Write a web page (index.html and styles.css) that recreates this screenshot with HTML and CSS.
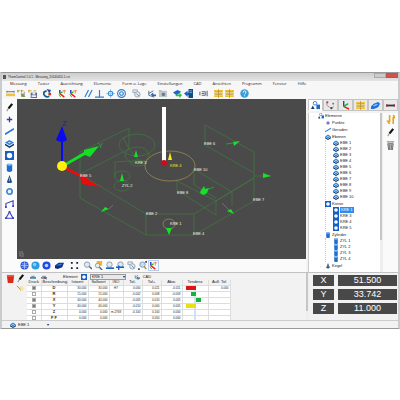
FILE: index.html
```html
<!DOCTYPE html>
<html lang="de">
<head>
  <meta charset="UTF-8" />
  <title>ThomControl</title>
  <link rel="stylesheet" href="styles.css">
</head>
<body>
  <!-- icon set -->
  <svg class="defs" aria-hidden="true">
    <symbol id="i-measure" viewBox="0 0 10 10"><path d="M1 4V2M9 4V2M1 3h8" stroke="#56a" fill="none"/><path d="M0 5h10v3H0z" fill="#f0c33c"/></symbol>
    <symbol id="i-probe" viewBox="0 0 10 10"><path d="M0 2h3M4 2h3M1 1v3M5 1v3" stroke="#b98c35"/><path d="M4 5h3l2 3v1H5z" fill="#7a9a55"/><path d="M8 3v4" stroke="#888"/></symbol>
    <symbol id="i-save" viewBox="0 0 10 10"><path d="M0 2h4M1 1v3M6 2h3" stroke="#d59a2c"/><path d="M3 4h7v6H3z" fill="#5c7089"/><path d="M5 4h3v2H5zM4 7h5v2H4z" fill="#eef"/></symbol>
    <symbol id="i-rotate" viewBox="0 0 10 10"><path d="M4 2Q0 3 1 6q2 4 6 2" stroke="#145a9c" stroke-width="2" fill="none"/><path d="M4 0l5 1-2 4z" fill="#145a9c"/><circle cx="7.500" cy="5.500" r="1.700" fill="#c8321e"/></symbol>
    <symbol id="i-axes" viewBox="0 0 10 10"><path d="M2 1v4" stroke="#22c" stroke-width="1.500"/><path d="M2 5l5 4" stroke="#e11" stroke-width="1.500"/><path d="M2 5l3-2" stroke="#1b1" stroke-width="1.500"/><path d="M1 6l2 3" stroke="#1b1"/><path d="M5 2h4M7 1v4" stroke="#d78a5a"/></symbol>
    <symbol id="i-parallel" viewBox="0 0 10 10"><path d="M1 9L5 1M5 9L9 1" stroke="#2f7fd0" stroke-width="1.300"/></symbol>
    <symbol id="i-perp" viewBox="0 0 10 10"><path d="M5 1v8M0 9h10" stroke="#2f7fd0" stroke-width="1.300"/></symbol>
    <symbol id="i-position" viewBox="0 0 10 10"><path d="M5 0v10M0 5h10" stroke="#9cc8ee"/><circle cx="5" cy="5" r="2.500" fill="none" stroke="#2f8fe0" stroke-width="1.300"/></symbol>
    <symbol id="i-concentric" viewBox="0 0 10 10"><circle cx="5" cy="5" r="4.300" fill="none" stroke="#2f7fd0" stroke-width="1.300"/><circle cx="5" cy="5" r="2" fill="none" stroke="#2f7fd0" stroke-width="1.200"/></symbol>
    <symbol id="i-zoom" viewBox="0 0 10 10"><circle cx="4.500" cy="4" r="3" fill="#dcebf7" stroke="#8796a5"/><path d="M7 6l3 3" stroke="#49627c" stroke-width="1.600"/></symbol>
    <symbol id="i-copy" viewBox="0 0 10 10"><path d="M1 1h5v3H1z" fill="#e3e9ee" stroke="#9aa8b4"/><circle cx="6" cy="6" r="3" fill="#dfe9f1" stroke="#8fa3b4"/><path d="M5 5l3 3" stroke="#5f8fb8"/></symbol>
    <symbol id="i-frame" viewBox="0 0 10 10"><path d="M2 2v5l6 2M2 5l5-3" stroke="#567" fill="none"/><path d="M4 6l3-2v2h3v2H7v1z" fill="#2267c4"/></symbol>
    <symbol id="i-camera" viewBox="0 0 10 10"><path d="M1 2h9v7H1z" fill="#bccac9"/><path d="M0 1h4v3" fill="#bbb"/><circle cx="6" cy="6" r="2" fill="#779"/></symbol>
    <symbol id="i-import" viewBox="0 0 10 10"><path d="M0 4l5-3 4 2-5 4z" fill="#1667d0"/><path d="M3 6h4V4l3 3-3 3V8H3z" fill="#26c43a"/></symbol>
    <symbol id="i-export" viewBox="0 0 10 10"><path d="M0 5l4-3v2h3v3H4v2z" fill="#1667d0"/><path d="M5 0h5v10H5z" fill="#184a80"/><path d="M6 2h3M6 4h3" stroke="#6bd"/></symbol>
    <symbol id="i-list" viewBox="0 0 10 10"><path d="M1 3v4M9 2v6M3 3h4M3 5h3M3 7h4" stroke="#667" stroke-width="1.200"/><path d="M7 3v4" stroke="#36b"/></symbol>
    <symbol id="i-report" viewBox="0 0 10 10"><path d="M0 1h10v2H0zM0 4h10v2H0zM0 7h10v2H0z" fill="#efc23a"/><path d="M5 0v10M1 3h8M1 6h8" stroke="#b58a2a" stroke-width=".700"/></symbol>
    <symbol id="i-help" viewBox="0 0 10 10"><circle cx="5" cy="5" r="4.700" fill="#3a9fd8"/><path d="M3.500 4q0-2 1.500-2t1.500 1.500T5 6M5 7v1" stroke="#fff" fill="none"/></symbol>
    <symbol id="i-brush" viewBox="0 0 10 10"><path d="M2 9l3-5" stroke="#9aa69a" stroke-width="1.400"/><path d="M4 6l4-5" stroke="#111" stroke-width="2.400"/></symbol>
    <symbol id="i-point" viewBox="0 0 10 10"><path d="M5 2v6M2 5h6" stroke="#3238b0" stroke-width="1.400"/></symbol>
    <symbol id="i-line" viewBox="0 0 10 10"><path d="M0 8l10-6" stroke="#2878dc" stroke-width="1.800"/></symbol>
    <symbol id="i-plane" viewBox="0 0 10 10"><path d="M0 4l5-3 5 3-5 3z" fill="#2d86dd"/><path d="M0 5l5 3 5-3v2L5 10 0 7z" fill="#103a70"/><path d="M3 4l2-1 2 1-2 1z" fill="#bfe0fa"/></symbol>
    <symbol id="i-circle" viewBox="0 0 10 10"><path d="M0 0h10v10H0z" fill="#1660c4"/><circle cx="5" cy="5" r="3" fill="#fff"/></symbol>
    <symbol id="i-cylinder" viewBox="0 0 10 10"><path d="M2 1h6v8q-3 2-6 0z" fill="#1f6fd0"/><ellipse cx="5" cy="1.800" rx="3" ry="1.200" fill="#86bdf2"/></symbol>
    <symbol id="i-cone" viewBox="0 0 10 10"><path d="M5 0l3 8q-3 2-6 0z" fill="#24507e"/><path d="M5 3v4" stroke="#8db6dc"/></symbol>
    <symbol id="i-ring" viewBox="0 0 10 10"><circle cx="5" cy="5" r="3" fill="#e4f0fb" stroke="#3c84cc" stroke-width="1.800"/></symbol>
    <symbol id="i-path" viewBox="0 0 10 10"><path d="M1 9V5l8-3v6" stroke="#3a40c0" fill="none" stroke-width="1.200"/><path d="M0 8h2v2H0zM8 7h2v2H8z" fill="#3a40c0"/></symbol>
    <symbol id="i-angle" viewBox="0 0 10 10"><path d="M5 1L1 8h8z" stroke="#3a40c0" fill="none" stroke-width="1.200"/><path d="M0 7h2v2H0zM8 7h2v2H8zM4 0h2v2H4z" fill="#3a40c0"/></symbol>
    <symbol id="i-globe" viewBox="0 0 10 10"><circle cx="5" cy="5" r="4.500" fill="#2450d8"/><path d="M1 5h8M5 1v8M2 3q3 1 6 0M2 7q3-1 6 0" stroke="#bcd4ff" fill="none" stroke-width=".800"/></symbol>
    <symbol id="i-sphere" viewBox="0 0 10 10"><circle cx="5" cy="5" r="4.500" fill="#2b9be4"/><circle cx="4" cy="4" r="2" fill="#7cd0fa"/></symbol>
    <symbol id="i-disc" viewBox="0 0 10 10"><circle cx="5" cy="5" r="4.500" fill="#2448e0"/><circle cx="5" cy="5" r="2" fill="#b8d2ff"/></symbol>
    <symbol id="i-solid" viewBox="0 0 10 10"><path d="M0 5l4-3 6 0-2 5-5 2-3-1z" fill="#0c2f86"/><path d="M1 5l4-2h4L6 5z" fill="#2b78ea"/></symbol>
    <symbol id="i-cad" viewBox="0 0 10 10"><path d="M0 6l3-3 5-2 2 2-2 4-5 2-3 0z" fill="#1a6fe0"/><path d="M2 5l4-2 2 1-4 2z" fill="#7db8f6"/></symbol>
    <symbol id="i-fit" viewBox="0 0 10 10"><path d="M1 1h2v2H1zM7 1h2v2H7zM1 7h2v2H1zM7 7h2v2H7z" fill="#123"/></symbol>
    <symbol id="i-zoomsel" viewBox="0 0 10 10"><path d="M3 0h6v5H3z" fill="#f1b52c"/><circle cx="4" cy="5" r="2.500" fill="#e8eef4" stroke="#8796a5"/><path d="M6 7l3 3" stroke="#49627c" stroke-width="1.600"/></symbol>
    <symbol id="i-zoomline" viewBox="0 0 10 10"><circle cx="5" cy="4" r="3" fill="#dcebf7" stroke="#8796a5"/><path d="M1 8h9" stroke="#1660c4" stroke-width="1.800"/></symbol>
    <symbol id="i-zoomplus" viewBox="0 0 10 10"><circle cx="5" cy="4" r="3" fill="#dcebf7" stroke="#8796a5"/><path d="M3 5v5M0 7h9" stroke="#1660c4" stroke-width="1.600"/></symbol>
    <symbol id="i-zoomarea" viewBox="0 0 10 10"><path d="M0 9h2M9 0v2" stroke="#111" stroke-width="1.500"/><circle cx="5" cy="4" r="3" fill="#bfe0f7" stroke="#8796a5"/><path d="M7 6l2 3" stroke="#a88a4c" stroke-width="1.600"/></symbol>
    <symbol id="i-shapes" viewBox="0 0 10 10"><circle cx="4.500" cy="2.500" r="2" fill="none" stroke="#2878dc"/><path d="M0 9l2-4 2 4z" fill="#153a6b"/><path d="M6 4h4v5H6z" fill="#2267c4"/></symbol>
    <symbol id="i-pins" viewBox="0 0 10 10"><path d="M1 1v4l5 3 3-2" stroke="#999" fill="none"/><circle cx="1.500" cy="1.500" r="1.200" fill="#c33"/><circle cx="6" cy="8" r="1.200" fill="#444"/><circle cx="8" cy="3" r="1" fill="#668"/></symbol>
    <symbol id="i-triad" viewBox="0 0 10 10"><path d="M3 0v6" stroke="#1a3fd0" stroke-width="1.500"/><path d="M3 6l6 3" stroke="#e11" stroke-width="1.500"/><path d="M3 6l5-3" stroke="#1b1" stroke-width="1.500"/></symbol>
    <symbol id="i-tool" viewBox="0 0 10 10"><path d="M0 4h10v2H0z" fill="#334"/><path d="M0 4h2v2H0zM8 4h2v2H8z" fill="#b22"/></symbol>
    <symbol id="i-bolt" viewBox="0 0 10 10"><path d="M4 0v7H2l2 3M8 10V3h2L8 0" stroke="#e8a21c" fill="none" stroke-width="1.800"/></symbol>
    <symbol id="i-trash" viewBox="0 0 10 10"><path d="M1 1h8M2 3h6l-1 7H3z" stroke="#666" fill="#bbb"/><path d="M4 4v5M6 4v5" stroke="#555" stroke-width=".700"/></symbol>
    <symbol id="i-trash-red" viewBox="0 0 10 10"><path d="M1 2h8l-1 8H2z" fill="#d92a1c"/><path d="M1 1h8v2H1z" fill="#f0563f"/></symbol>
    <symbol id="i-wand" viewBox="0 0 10 10"><path d="M2 4l5-2 2 4-4 3z" fill="#f5e7a2"/><path d="M1 2l4 4" stroke="#9a8b5c"/></symbol>
    <symbol id="i-print" viewBox="0 0 10 10"><path d="M0 5h10v3H0z" fill="#3f8fb8"/><path d="M2 3h6v2H2z" fill="#8c99a5"/></symbol>
    <symbol id="i-noprint" viewBox="0 0 10 10"><path d="M0 5h10v3H0z" fill="#6c8fa8"/><path d="M2 3h6v2H2z" fill="#8c99a5"/><path d="M5 5l4 4M9 5L5 9" stroke="#d22" stroke-width="1.500"/></symbol>
  </svg>

  <div class="window">
    <header class="titlebar">
      <span class="app-mark"></span>
      <h1>ThomControl 1.0.1 - Messung_20140424-1.cvi</h1>
      <div class="caption">
        <button class="minmax" aria-label="Minimieren"></button>
        <button class="close" aria-label="Schließen"></button>
      </div>
    </header>

    <nav class="menu">
      <a href="#">Messung</a>
      <a href="#">Taster</a>
      <a href="#">Ausrichtung</a>
      <a href="#">Elemente</a>
      <a href="#">Form u. Lage</a>
      <a href="#">Einstellungen</a>
      <a href="#">CAD</a>
      <a href="#">Ansichten</a>
      <a href="#">Programm</a>
      <a href="#">Fenster</a>
      <a href="#">Hilfe</a>
    </nav>

    <div class="toolbar">
      <div class="group">
        <button aria-label="Messen"><svg><use href="#i-measure"/></svg></button>
        <button aria-label="Taster"><svg><use href="#i-probe"/></svg></button>
        <button aria-label="Speichern"><svg><use href="#i-save"/></svg></button>
      </div>
      <div class="group">
        <button aria-label="Drehen"><svg><use href="#i-rotate"/></svg></button>
      </div>
      <div class="group">
        <button aria-label="Ausrichten"><svg><use href="#i-axes"/></svg></button>
        <button aria-label="Nullpunkt"><svg><use href="#i-axes"/></svg></button>
      </div>
      <div class="group">
        <button aria-label="Parallel"><svg><use href="#i-parallel"/></svg></button>
        <button aria-label="Rechtwinklig"><svg><use href="#i-perp"/></svg></button>
        <button aria-label="Position"><svg><use href="#i-position"/></svg></button>
        <button aria-label="Konzentrisch"><svg><use href="#i-concentric"/></svg></button>
      </div>
      <div class="group">
        <button aria-label="Kopieren"><svg><use href="#i-copy"/></svg></button>
      </div>
      <div class="group">
        <button aria-label="Bezug"><svg><use href="#i-frame"/></svg></button>
        <button aria-label="Bild"><svg><use href="#i-camera"/></svg></button>
      </div>
      <div class="group">
        <button aria-label="Import"><svg><use href="#i-import"/></svg></button>
        <button aria-label="Export"><svg><use href="#i-export"/></svg></button>
      </div>
      <div class="group">
        <button aria-label="Liste"><svg><use href="#i-list"/></svg></button>
      </div>
      <div class="group">
        <button aria-label="Bericht"><svg><use href="#i-report"/></svg></button>
        <button aria-label="Bericht bearbeiten"><svg><use href="#i-report"/></svg></button>
      </div>
      <div class="group">
        <button aria-label="Hilfe"><svg><use href="#i-help"/></svg></button>
      </div>
    </div>

    <main class="work">
      <div class="elements-bar">
        <button aria-label="Auto"><svg><use href="#i-brush"/></svg></button>
        <button aria-label="Punkt"><svg><use href="#i-point"/></svg></button>
        <button aria-label="Gerade"><svg><use href="#i-line"/></svg></button>
        <button aria-label="Ebene"><svg><use href="#i-plane"/></svg></button>
        <button aria-label="Kreis"><svg><use href="#i-circle"/></svg></button>
        <button aria-label="Zylinder"><svg><use href="#i-cylinder"/></svg></button>
        <button aria-label="Kegel"><svg><use href="#i-cone"/></svg></button>
        <button aria-label="Kugel"><svg><use href="#i-ring"/></svg></button>
        <button aria-label="Abstand"><svg><use href="#i-path"/></svg></button>
        <button aria-label="Winkel"><svg><use href="#i-angle"/></svg></button>
      </div>

      <section class="view">
        <svg class="scene" viewBox="17 99 289 160">
          <!-- part outline -->
          <g class="edges">
            <path d="M80 198V152L129 128V149L80 174L146 214H194L254 178"/>
            <path d="M80 198L146 235H194L254 201V152L205 125V145L254 173"/>
            <path d="M146 214V235M194 214V235M254 176H271"/>
            <path d="M177 181V190L216 215V201L177 181M194 169L232 192V206M194 169V185L216 198M216 201L254 178"/>
            <path d="M123 137L129 149L141 163M115 178V162L130 161"/>
            <ellipse cx="137" cy="145" rx="18" ry="11"/>
            <ellipse cx="137" cy="155" rx="12" ry="8"/>
            <ellipse cx="138" cy="163" rx="8" ry="3"/>
            <ellipse cx="122" cy="176" rx="8" ry="5"/>
            <ellipse cx="122" cy="186" rx="8" ry="5"/>
          </g>
          <g class="rings">
            <ellipse cx="170" cy="166" rx="25" ry="15"/>
            <ellipse cx="169" cy="224" rx="6" ry="5"/>
          </g>
          <!-- normals -->
          <g class="normals">
            <path d="M136 150l2 7h-4zM122 173l2 8h-4zM169 235l-3-7h6z"/>
            <path d="M240 141l-7 1 1 4zM271 176l-8-3v5zM101 212l4-5 4 2zM234 214l-3-5-4 2z"/>
            <path d="M204 186l1 3 4-1-2 5-3 2-3-1-1-2z"/>
            <path class="line" d="M109 209l4-4M226 144l7-1M222 203l7 7M209 189l5-2"/>
          </g>
          <path class="selected" d="M170 152l2 8h-4z"/>
          <!-- machine axes -->
          <path class="axis-z" d="M61 140h2v26h-2zM62 126l5 14q-5 4-11 0z"/>
          <path class="axis-y" d="M62 165L84 152V150L99 146L90 157L85 155L62 168z"/>
          <path class="axis-x" d="M62 165L84 176L99 187L82 184L80 177L62 168z"/>
          <circle class="origin" cx="62" cy="166" r="5"/>
          <text class="z" x="62" y="126">Z</text>
          <text class="y" x="98" y="148">Y</text>
          <!-- stylus -->
          <path class="shaft" d="M162 107h4v54h-4z"/>
          <circle class="ball" cx="164" cy="163" r="3"/>
          <g class="labels">
            <text x="80" y="177">EBE 5</text>
            <text x="135" y="164">KRE 3</text>
            <text x="122" y="187">ZYL 2</text>
            <text class="active" x="170" y="167">KRE 4</text>
            <text x="204" y="145">EBE 6</text>
            <text x="194" y="171">EBE 10</text>
            <text x="177" y="194">EBE 8</text>
            <text x="253" y="201">EBE 7</text>
            <text x="146" y="215">EBE 2</text>
            <text x="170" y="225">KRE 1</text>
            <text x="193" y="235">EBE 4</text>
          </g>
          <path class="corner" d="M20 251v5h4M22 251v3h2"/>
        </svg>
        <div class="view-bar">
          <button aria-label="Gitter"><svg><use href="#i-globe"/></svg></button>
          <button aria-label="Flächen"><svg><use href="#i-sphere"/></svg></button>
          <button aria-label="Kanten"><svg><use href="#i-disc"/></svg></button>
          <button class="wide" aria-label="Körper"><svg><use href="#i-solid"/></svg></button>
          <button class="wide" aria-label="Einpassen"><svg><use href="#i-fit"/></svg></button>
          <button aria-label="Lupe"><svg><use href="#i-zoom"/></svg></button>
          <button aria-label="Auswahl"><svg><use href="#i-zoomsel"/></svg></button>
          <button aria-label="Kleiner"><svg><use href="#i-zoomline"/></svg></button>
          <button aria-label="Größer"><svg><use href="#i-zoomplus"/></svg></button>
          <button aria-label="Zoom zurück"><svg><use href="#i-copy"/></svg></button>
          <button aria-label="Zoom Bereich"><svg><use href="#i-zoomarea"/></svg></button>
          <button class="on" aria-label="Achsen"><svg><use href="#i-axes"/></svg></button>
        </div>
      </section>

      <aside class="side">
        <div class="tabs">
          <button class="on" aria-label="Elemente"><svg><use href="#i-shapes"/></svg></button>
          <button aria-label="Taster"><svg><use href="#i-pins"/></svg></button>
          <button aria-label="Achsen"><svg><use href="#i-triad"/></svg></button>
          <button aria-label="Bericht"><svg><use href="#i-report"/></svg></button>
          <button aria-label="CAD"><svg><use href="#i-cad"/></svg></button>
          <button aria-label="Werkzeug"><svg><use href="#i-tool"/></svg></button>
        </div>
        <div class="side-body">
          <ul class="tree">
            <li class="open"><svg><use href="#i-shapes"/></svg>Elemente
              <ul>
                <li><svg><use href="#i-point"/></svg>Punkte</li>
                <li><svg><use href="#i-line"/></svg>Geraden</li>
                <li class="open"><svg><use href="#i-plane"/></svg>Ebenen
                  <ul>
                    <li><svg><use href="#i-plane"/></svg>EBE 1</li>
                    <li><svg><use href="#i-plane"/></svg>EBE 2</li>
                    <li><svg><use href="#i-plane"/></svg>EBE 3</li>
                    <li><svg><use href="#i-plane"/></svg>EBE 4</li>
                    <li><svg><use href="#i-plane"/></svg>EBE 5</li>
                    <li><svg><use href="#i-plane"/></svg>EBE 6</li>
                    <li><svg><use href="#i-plane"/></svg>EBE 7</li>
                    <li><svg><use href="#i-plane"/></svg>EBE 8</li>
                    <li><svg><use href="#i-plane"/></svg>EBE 9</li>
                    <li><svg><use href="#i-plane"/></svg>EBE 10</li>
                  </ul>
                </li>
                <li class="open"><svg><use href="#i-circle"/></svg>Kreise
                  <ul>
                    <li><svg><use href="#i-circle"/></svg><mark>KRE 1</mark></li>
                    <li><svg><use href="#i-circle"/></svg>KRE 3</li>
                    <li><svg><use href="#i-circle"/></svg>KRE 4</li>
                    <li><svg><use href="#i-circle"/></svg>KRE 5</li>
                  </ul>
                </li>
                <li class="open"><svg><use href="#i-cylinder"/></svg>Zylinder
                  <ul>
                    <li><svg><use href="#i-cylinder"/></svg>ZYL 1</li>
                    <li><svg><use href="#i-cylinder"/></svg>ZYL 2</li>
                    <li><svg><use href="#i-cylinder"/></svg>ZYL 3</li>
                    <li><svg><use href="#i-cylinder"/></svg>ZYL 4</li>
                  </ul>
                </li>
                <li class="open"><svg><use href="#i-cone"/></svg>Kegel</li>
              </ul>
            </li>
          </ul>
          <div class="scroll"><span></span></div>
          <div class="side-tools">
            <button aria-label="Sortieren"><svg><use href="#i-bolt"/></svg></button>
            <button aria-label="Bearbeiten"><svg><use href="#i-brush"/></svg></button>
            <button aria-label="Löschen"><svg><use href="#i-trash"/></svg></button>
          </div>
        </div>
      </aside>
    </main>

    <section class="bottom">
      <div class="result-tools">
        <button aria-label="Löschen"><svg><use href="#i-trash-red"/></svg></button>
        <button aria-label="Bearbeiten"><svg><use href="#i-brush"/></svg></button>
        <button class="second" aria-label="Neu"><svg><use href="#i-wand"/></svg></button>
      </div>
      <div class="result">
        <div class="result-bar">
          <button aria-label="Drucken"><svg><use href="#i-print"/></svg></button>
          <button aria-label="Nicht drucken"><svg><use href="#i-noprint"/></svg></button>
          <label for="element">Element</label>
          <svg><use href="#i-circle"/></svg>
          <div class="pick">
            <select id="element"><option>KRE 1</option></select>
          </div>
          <button class="cad"><svg><use href="#i-frame"/></svg>CAD</button>
        </div>
        <table>
          <colgroup><col class="c-print"><col class="c-name"><col class="c-num"><col class="c-num"><col class="c-iso"><col class="c-tol"><col class="c-tol"><col class="c-num"><col class="c-trend"><col class="c-out"></colgroup>
          <thead>
            <tr><th>Druck</th><th>Beschreibung</th><th>Istwert</th><th>Sollwert</th><th>ISO</th><th>Tol-</th><th>Tol+</th><th>Abw.</th><th>Tendenz</th><th>Aufl. Tol</th></tr>
          </thead>
          <tbody>
            <tr><td><input type="checkbox" aria-label="D drucken" checked></td><th>D</th><td>30.000</td><td>30.000</td><td class="iso">H7</td><td>0.000</td><td>0.021</td><td>-0.011</td><td class="trend"><i class="red"></i></td><td>0.000</td></tr>
            <tr><td><input type="checkbox" aria-label="R drucken"></td><th>R</th><td>15.000</td><td>15.000</td><td></td><td>-0.002</td><td>0.008</td><td>-0.003</td><td class="trend"><i class="green-left"></i></td><td></td></tr>
            <tr><td><input type="checkbox" aria-label="X drucken" checked></td><th>X</th><td>40.000</td><td>40.000</td><td></td><td>-0.005</td><td>0.010</td><td>0.005</td><td class="trend"><i class="green"></i></td><td></td></tr>
            <tr><td><input type="checkbox" aria-label="Y drucken" checked></td><th>Y</th><td>40.000</td><td>40.000</td><td></td><td>-0.010</td><td>0.000</td><td>0.005</td><td class="trend"><i class="yellow"></i></td><td></td></tr>
            <tr><td><input type="checkbox" aria-label="Z drucken"></td><th>Z</th><td>0.000</td><td>0.000</td><td class="iso">m-2768</td><td>-0.100</td><td>0.100</td><td>0.000</td><td class="trend"></td><td></td></tr>
            <tr><td><input type="checkbox" aria-label="FF drucken"></td><th>F F</th><td>0.000</td><td>0.000</td><td></td><td></td><td>0.050</td><td>0.000</td><td class="trend"></td><td></td></tr>
          </tbody>
        </table>
      </div>
      <div class="scroll"><span></span></div>
      <dl class="readout">
        <dt>X</dt><dd>51.500</dd>
        <dt>Y</dt><dd>33.742</dd>
        <dt>Z</dt><dd>11.000</dd>
      </dl>
    </section>

    <footer class="status">
      <svg><use href="#i-plane"/></svg>
      <span>EBE 1</span>
      <span class="end">▾</span>
    </footer>
  </div>
</body>
</html>
```

FILE: styles.css
```css
* {
  box-sizing: border-box;
}

body {
  margin: 0;
  padding-top: 72px;
  background: #fff;
  font: 4px/6px "Liberation Sans", Arial, sans-serif;
  color: #222;
}

.defs {
  display: none;
}

button {
  display: flex;
  align-items: center;
  justify-content: center;
  padding: 0;
  border: 0;
  background: none;
  font: inherit;
  color: inherit;
}

button svg {
  width: 9px;
  height: 9px;
}

.window {
  background: #f2f2f2;
  border: solid #b4b8bc;
  border-width: 1px 2px;
  border-color: #999 #c9cccf;
}

/* title, menu, toolbar */
.titlebar {
  display: flex;
  align-items: center;
  height: 8px;
  padding-left: 1px;
  background: linear-gradient(#cdcdcd, #e4e4e4);
}

.app-mark {
  width: 3px;
  height: 4px;
  margin-right: 2px;
  background: #555;
}

h1 {
  flex: 1;
  margin: 0;
  font-size: 3px;
  font-weight: normal;
}

.caption {
  display: flex;
  align-self: flex-start;
}

.minmax,
.close {
  width: 12px;
  height: 5px;
  background: #ccc;
  border: 1px solid #aaa;
}

.close {
  background: #cf5546;
  border-color: #b55;
}

.menu {
  display: flex;
  gap: 11px;
  height: 7px;
  padding-left: 8px;
  background: #f7f7f7;
  font-family: "Open Sans", sans-serif;
}

.menu a {
  color: #222;
  text-decoration: none;
}

.toolbar {
  display: flex;
  align-items: center;
  gap: 6px;
  height: 11px;
  padding-left: 4px;
  background: #f7f7f7;
}

.group {
  display: flex;
  gap: 2px;
}

/* workspace */
.work {
  display: grid;
  grid-template-columns: 15px 1fr 92px;
}

.elements-bar {
  display: flex;
  flex-direction: column;
  align-items: center;
  gap: 3px;
  padding-top: 4px;
  background: #fbfbfb;
}

.scene {
  display: block;
  width: 100%;
  background: #4a4a4a;
}

.edges,
.rings,
.corner {
  fill: none;
  stroke: #3f7a41;
  stroke-width: 0.7;
}

.rings {
  stroke: #a3944f;
}

.corner {
  stroke: #999;
}

.normals {
  fill: #17e02a;
}

.normals .line {
  fill: none;
  stroke: #2c9b35;
}

.selected {
  fill: #f6ee1c;
}

.axis-z {
  fill: #0a0aee;
}

.axis-y {
  fill: #12e022;
}

.axis-x {
  fill: #e80c0c;
}

.origin {
  fill: #ffee10;
}

.scene text {
  font-size: 4px;
  fill: #eee;
}

.scene .z {
  font-size: 8px;
  fill: #1a1ad0;
}

.scene .y {
  font-size: 8px;
  fill: #1fae2c;
}

.scene .active {
  fill: #f2e420;
}

.shaft {
  fill: #fff;
}

.ball {
  fill: #d00a1e;
}

.view-bar {
  display: flex;
  align-items: center;
  gap: 2px;
  height: 13px;
  padding-left: 3px;
  background: #fafafa;
}

.view-bar .wide {
  width: 13px;
}

.view-bar .on {
  outline: 1px solid #b9cdf0;
}

/* element tree */
.side {
  display: flex;
  flex-direction: column;
  padding-left: 2px;
}

.tabs {
  display: grid;
  grid-template-columns: repeat(6, 1fr);
  height: 12px;
}

.tabs button {
  background: #e9e9e9;
  border: 1px solid #c4c4c4;
}

.tabs .on {
  background: #fff;
  border-bottom-color: #fff;
}

.side-body {
  flex: 1;
  display: flex;
  padding-top: 2px;
}

.tree {
  flex: 1;
  padding: 0 0 0 9px;
  background: #fff;
  border-left: 1px solid #ccc;
}

.tree,
.tree ul {
  margin: 0;
  list-style: none;
}

.tree ul {
  padding-left: 7px;
}

.tree > li > ul > li {
  margin-top: 1px;
}

.tree svg {
  width: 6px;
  height: 6px;
  margin-right: 1px;
  vertical-align: top;
}

.tree .open::before {
  content: "-";
  position: absolute;
  margin-left: -5px;
  color: #888;
}

.tree ul ul {
  border-left: 1px dotted #ccc;
}

.tree mark {
  display: inline-block;
  padding: 0 1px;
  background: #2f8cf0;
  color: #fff;
}

.scroll {
  width: 3px;
  background: #eee;
}

.scroll span {
  display: block;
  width: 2px;
  height: 80%;
  background: #c6c6c6;
}

.side-tools {
  display: flex;
  flex-direction: column;
  align-items: center;
  gap: 4px;
  width: 15px;
  padding-top: 2px;
  background: #fafafa;
}

/* results */
.bottom {
  display: flex;
  height: 48px;
  border-top: 1px solid #c2c2c2;
  overflow: hidden;
}

.result-tools {
  display: grid;
  grid-template-columns: 9px 9px;
  grid-template-rows: 9px 9px;
  gap: 1px;
  width: 25px;
  padding: 1px 0 0 4px;
}

.result-tools .second {
  grid-column: 2;
}

.result {
  flex: 1;
  min-width: 0;
}

.result-bar {
  display: flex;
  align-items: center;
  gap: 3px;
  height: 7px;
  padding-left: 2px;
}

.result-bar svg {
  width: 6px;
  height: 6px;
}

.result-bar button {
  width: 8px;
}

.result-bar label {
  margin-left: 12px;
}

.pick {
  position: relative;
  width: 36px;
}

.pick::after {
  content: "▾";
  position: absolute;
  right: 1px;
  top: 0;
}

select {
  display: block;
  width: 100%;
  height: 6px;
  padding: 0 1px;
  border: 1px solid #999;
  background: #e9e9e9;
  font: inherit;
  line-height: 4px;
  color: inherit;
  appearance: none;
}

.result-bar .cad {
  width: auto;
  gap: 3px;
  margin-left: 5px;
}

table {
  table-layout: fixed;
  width: 203px;
  border-collapse: collapse;
  font-size: 3px;
}

.c-print,
.c-iso {
  width: 14px;
}

.c-name,
.c-trend {
  width: 26px;
}

.c-num {
  width: 21px;
}

.c-tol {
  width: 19px;
}

.c-out {
  width: 22px;
}

td,
th {
  height: 6px;
  padding: 0 1px;
  line-height: 4px;
  border: solid #ddd;
  border-width: 0 1px 1px 0;
  text-align: right;
  background: #fff;
  white-space: nowrap;
}

th,
td:first-child,
.iso {
  text-align: center;
}

thead th {
  height: 5px;
  background: #f2f2f2;
  font-size: 4px;
  font-weight: normal;
}

tbody th {
  font-size: 4px;
}

input[type="checkbox"] {
  display: block;
  width: 4px;
  height: 4px;
  margin: 0 auto;
  border: 1px solid #aaa;
  background: #fff;
  appearance: none;
}

input[type="checkbox"]:checked {
  background: #778;
}

/* tolerance band with its zero line */
.trend {
  background: linear-gradient(90deg, transparent 12px, #a9c0e8 12px, #a9c0e8 13px, transparent 13px) #fff;
}

.trend i {
  display: block;
  width: 10px;
  height: 4px;
  margin-left: 2px;
}

.trend .red {
  background: #dc1414;
}

.trend .yellow {
  background: #e8e012;
}

.trend .green,
.trend .green-left {
  width: 5px;
  margin-left: 12px;
  background: #14b43c;
}

.trend .green-left {
  margin-left: 7px;
}

.readout {
  display: grid;
  grid-template-columns: 21px 1fr;
  grid-auto-rows: 11px;
  gap: 3px 4px;
  width: 89px;
  margin: 0;
  padding: 2px 1px 0 4px;
  font-size: 9px;
  line-height: 11px;
  text-align: center;
  color: #fff;
}

.readout dt,
.readout dd {
  margin: 0;
  background: #484848;
}

.status {
  display: flex;
  align-items: center;
  gap: 2px;
  height: 8px;
  padding-left: 8px;
  border-top: 1px solid #ccc;
}

.status svg {
  width: 6px;
  height: 6px;
}

.status .end {
  margin-left: 16px;
}
```
